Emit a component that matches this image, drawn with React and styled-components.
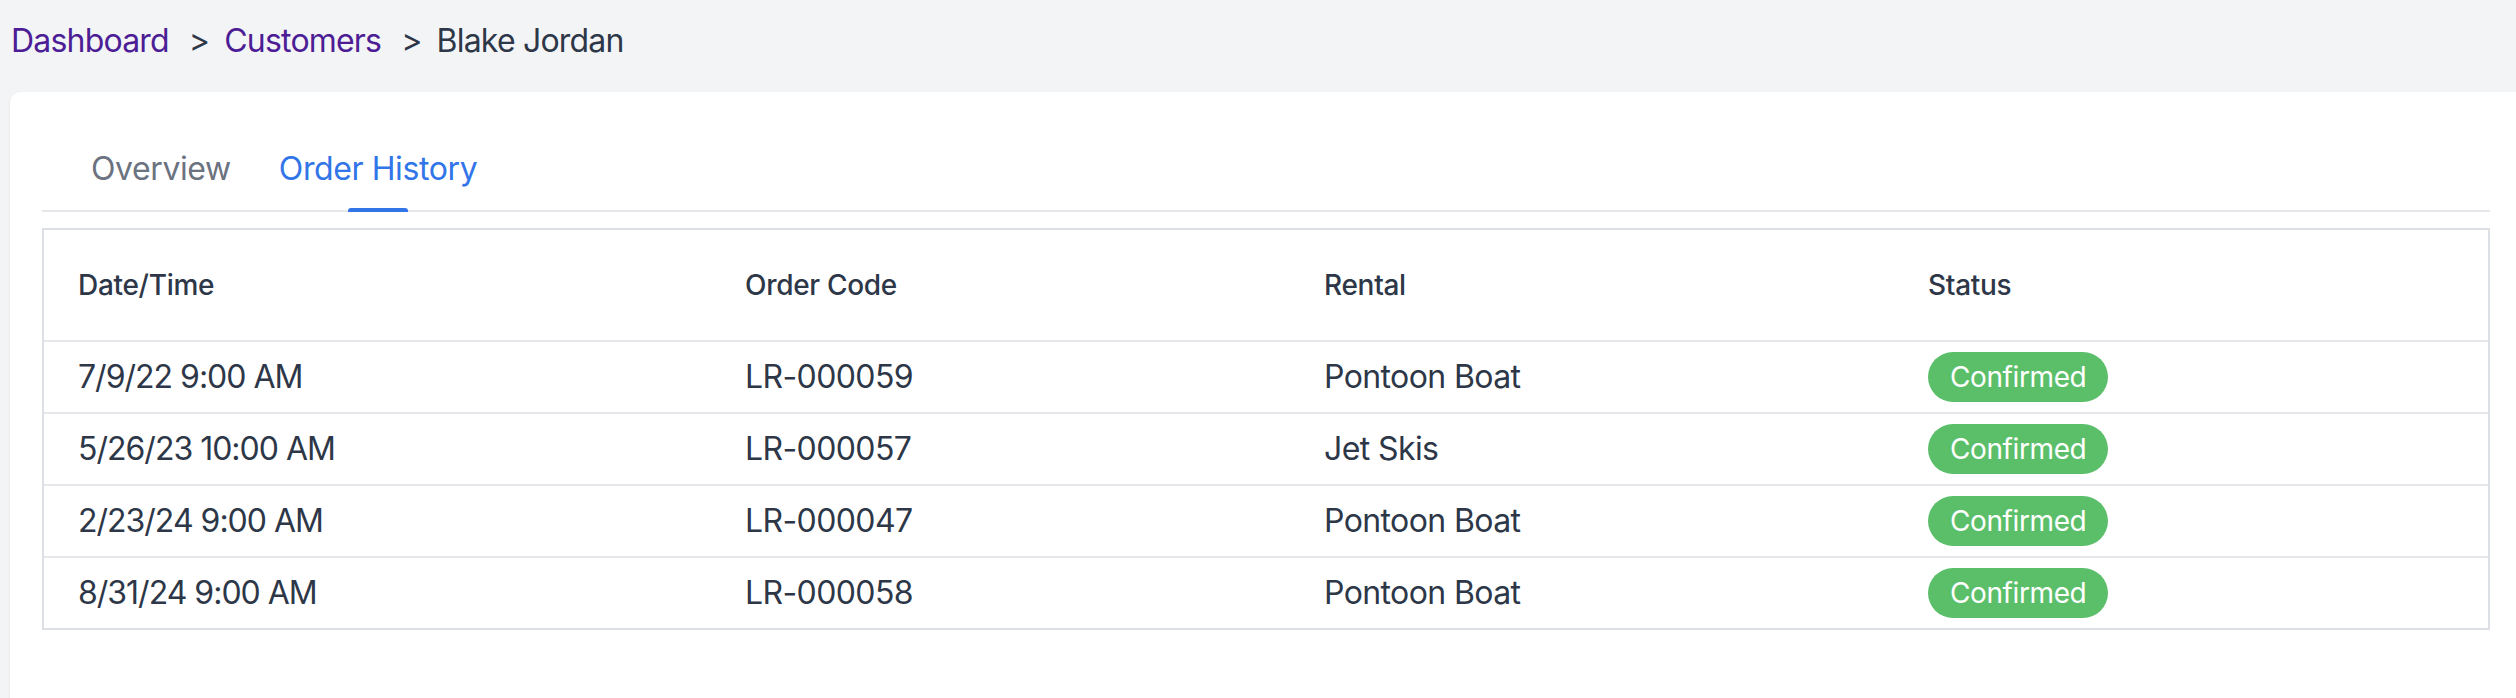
import styled, { createGlobalStyle } from 'styled-components'

/* ── Data ── */
const ORDERS = [
  { date: '7/9/22 9:00 AM',    code: 'LR-000059', rental: 'Pontoon Boat', status: 'Confirmed' },
  { date: '5/26/23 10:00 AM',  code: 'LR-000057', rental: 'Jet Skis',     status: 'Confirmed' },
  { date: '2/23/24 9:00 AM',   code: 'LR-000047', rental: 'Pontoon Boat', status: 'Confirmed' },
  { date: '8/31/24 9:00 AM',   code: 'LR-000058', rental: 'Pontoon Boat', status: 'Confirmed' },
]

const COLUMNS = [
  { label: 'Date/Time',  width: 667 },
  { label: 'Order Code', width: 579 },
  { label: 'Rental',     width: 604 },
  { label: 'Status',     width: 594 },
]

/* ── Styled ── */
const Global = createGlobalStyle`
  *{box-sizing:border-box;}
  body{margin:0;background:#f3f4f6;font-family:Inter,"Noto Sans",sans-serif;color:#2d3748;overflow:hidden;}
`

const Page       = styled.div`padding:0 0 0 10px;min-height:698px;`
const Crumbs     = styled.nav`display:flex;align-items:center;height:92px;padding:0 0 10px 1px;font-size:32px;line-height:48px;letter-spacing:-0.8px;`
const CrumbLink  = styled.a`color:#4c1d95;text-decoration:none;`
const CrumbSep   = styled.span`color:#2d3748;margin:0 15px 0 20px;`
const CrumbCur   = styled.span`color:#2d3748;`

const Card       = styled.section`background:#fff;border-radius:10px 0 0 0;box-shadow:0 1px 3px rgba(0,0,0,.08);padding:53px 26px 60px 32px;min-height:606px;`

const TabList    = styled.div`display:flex;padding-left:25px;border-bottom:2px solid #e5e7eb;`
const Tab        = styled.div`
  position:relative;padding:0 24px 17px;font-size:32px;line-height:48px;letter-spacing:-0.4px;
  color:${({ $active }) => $active ? '#3175e8' : '#6b7280'};
  &::after{
    content:'';display:${({ $active }) => $active ? 'block' : 'none'};
    position:absolute;left:50%;bottom:-2px;width:60px;height:4px;margin-left:-30px;
    background:#3175e8;border-radius:3px 3px 0 0;
  }
`

const Table      = styled.table`margin-top:16px;width:2448px;table-layout:fixed;border-collapse:separate;border-spacing:0;border:2px solid #dcdfe3;`
const Th         = styled.th`text-align:left;font-weight:500;font-size:28px;line-height:40px;letter-spacing:-0.3px;padding:35px 0 35px 34px;border-bottom:2px solid #e5e7eb;color:#2d3748;`
const Td         = styled.td`
  height:${({ $last }) => $last ? 70 : 72}px;padding:0 0 0 34px;vertical-align:middle;
  font-size:32px;line-height:40px;letter-spacing:${({ $digits }) => $digits ? '-1px' : '-0.6px'};color:#2d3748;
  border-bottom:${({ $last }) => $last ? 'none' : '2px solid #e5e7eb'};
`
const Badge      = styled.span`display:inline-flex;align-items:center;height:50px;padding:0 22px;border-radius:25px;background:#5bbf6a;color:#fff;font-size:28px;line-height:1;letter-spacing:-0.4px;vertical-align:middle;`

const App = () => (
  <Page>
    <Global />
    <Crumbs>
      <CrumbLink href="#">Dashboard</CrumbLink>
      <CrumbSep>&gt;</CrumbSep>
      <CrumbLink href="#">Customers</CrumbLink>
      <CrumbSep>&gt;</CrumbSep>
      <CrumbCur>Blake Jordan</CrumbCur>
    </Crumbs>

    <Card>
      <TabList>
        <Tab>Overview</Tab>
        <Tab $active>Order History</Tab>
      </TabList>

      <Table>
        <colgroup>
          {COLUMNS.map(c => <col key={c.label} style={{ width: c.width }} />)}
        </colgroup>
        <thead>
          <tr>
            {COLUMNS.map(c => <Th key={c.label}>{c.label}</Th>)}
          </tr>
        </thead>
        <tbody>
          {ORDERS.map((o, i) => {
            const last = i === ORDERS.length - 1
            return (
              <tr key={o.code}>
                <Td $last={last} $digits>{o.date}</Td>
                <Td $last={last}>{o.code}</Td>
                <Td $last={last}>{o.rental}</Td>
                <Td $last={last}><Badge>{o.status}</Badge></Td>
              </tr>
            )
          })}
        </tbody>
      </Table>
    </Card>
  </Page>
)

export default App
